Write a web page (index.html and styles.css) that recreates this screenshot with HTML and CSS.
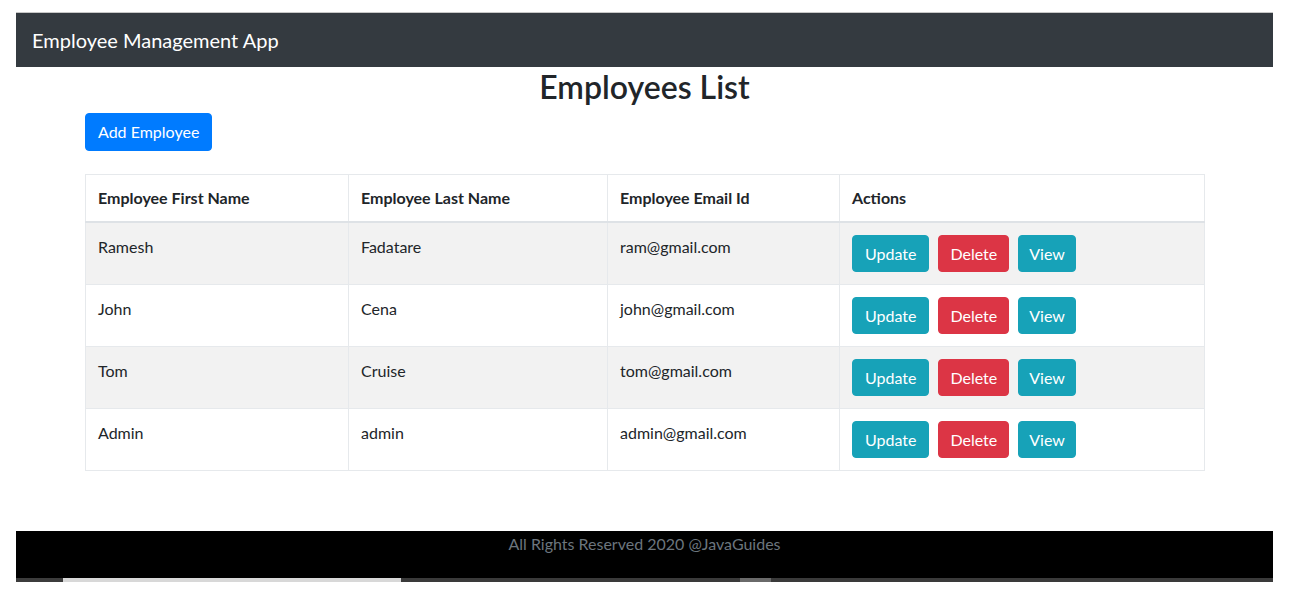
FILE: index.html
```html
<!DOCTYPE html>
<html lang="en">
<head>
<meta charset="utf-8">
<title>Employee Management App</title>
<link rel="stylesheet" href="styles.css">
</head>
<body>
<div class="app">
  <div class="topline"></div>
  <header class="navbar">
    <span class="brand">Employee Management App</span>
  </header>
  <main class="main">
    <h2 class="title">Employees List</h2>
    <div class="container">
      <button class="btn btn-primary">Add Employee</button>
      <table class="table">
        <colgroup>
          <col class="c1"><col class="c2"><col class="c3"><col class="c4">
        </colgroup>
        <thead>
          <tr>
            <th>Employee First Name</th>
            <th>Employee Last Name</th>
            <th>Employee Email Id</th>
            <th>Actions</th>
          </tr>
        </thead>
        <tbody>
          <tr class="odd">
            <td>Ramesh</td><td>Fadatare</td><td>ram@gmail.com</td>
            <td><div class="actions"><button class="btn btn-info">Update</button><button class="btn btn-danger">Delete</button><button class="btn btn-info btn-view">View</button></div></td>
          </tr>
          <tr>
            <td>John</td><td>Cena</td><td>john@gmail.com</td>
            <td><div class="actions"><button class="btn btn-info">Update</button><button class="btn btn-danger">Delete</button><button class="btn btn-info btn-view">View</button></div></td>
          </tr>
          <tr class="odd">
            <td>Tom</td><td>Cruise</td><td>tom@gmail.com</td>
            <td><div class="actions"><button class="btn btn-info">Update</button><button class="btn btn-danger">Delete</button><button class="btn btn-info btn-view">View</button></div></td>
          </tr>
          <tr>
            <td>Admin</td><td>admin</td><td>admin@gmail.com</td>
            <td><div class="actions"><button class="btn btn-info">Update</button><button class="btn btn-danger">Delete</button><button class="btn btn-info btn-view">View</button></div></td>
          </tr>
        </tbody>
      </table>
    </div>
  </main>
  <footer class="footer">
    <span class="footer-text">All Rights Reserved 2020 @JavaGuides</span>
  </footer>
  <div class="strip"></div>
</div>
</body>
</html>
```
FILE: styles.css
```css
* { box-sizing: border-box; }
html, body {
  margin: 0;
  padding: 0;
  background: #fff;
}
body {
  font-family: "Lato", "Noto Sans", sans-serif;
  font-size: 16px;
  line-height: 1.5;
  color: #212529;
  height: 592px;
  overflow: hidden;
}
.app {
  margin: 0 18px 0 16px;
  padding-top: 12px;
  height: 582px;
  display: flex;
  flex-direction: column;
}
.topline {
  height: 1px;
  background: #c8c8c8;
}
.navbar {
  height: 54px;
  background: #343a40;
  display: flex;
  align-items: center;
  padding: 0 16px;
}
.brand {
  color: #fff;
  font-size: 20px;
  line-height: 30px;
}
.main {
  flex: 1;
}
.title {
  margin: 0 0 8px;
  padding-top: 1px;
  font-size: 32px;
  font-weight: 600;
  line-height: 37px;
  text-align: center;
  color: #212529;
}
.container {
  margin-left: 69px;
  width: 1119px;
}
.btn {
  font-family: inherit;
  font-size: 16px;
  line-height: 24px;
  padding: 6px 12px;
  border: 1px solid transparent;
  border-radius: 4px;
  color: #fff;
  cursor: pointer;
  display: inline-block;
}
.btn-primary { background: #007bff; border-color: #007bff; }
.btn-info { background: #17a2b8; border-color: #17a2b8; height: 37px; padding: 6px 12px 5px; }
.btn-danger { background: #dc3545; border-color: #dc3545; height: 37px; padding: 6px 11px 5px; }
.btn-view { padding-left: 10px; padding-right: 10px; }
.table {
  margin-top: 23px;
  width: 100%;
  border-collapse: collapse;
  table-layout: fixed;
  border: 1px solid #e6e9ec;
}
.c1 { width: 263px; }
.c2 { width: 259px; }
.c3 { width: 232px; }
.c4 { width: 365px; }
.table th, .table td {
  border: 1px solid #e6e9ec;
  padding: 12px;
  text-align: left;
  vertical-align: top;
}
.table th {
  font-weight: 700;
  padding-top: 11px;
  padding-bottom: 11px;
  border-bottom: 2px solid #dee2e6;
}
.table td {
  padding-top: 12px;
  padding-bottom: 12px;
}
.table tr.odd td {
  background: #f2f2f2;
}
.actions {
  display: flex;
  gap: 9px;
}
.footer {
  height: 47px;
  background: #000;
  text-align: center;
}
.footer-text {
  color: #6c757d;
  line-height: 24px;
  display: inline-block;
  padding-top: 1px;
}
.strip {
  height: 4px;
  background: linear-gradient(to right,
    #3c3c3c 0 47px,
    #d8d8d8 47px 385px,
    #3a3a3a 385px 724px,
    #6a6a6a 724px 755px,
    #3a3a3a 755px 100%);
}
```
